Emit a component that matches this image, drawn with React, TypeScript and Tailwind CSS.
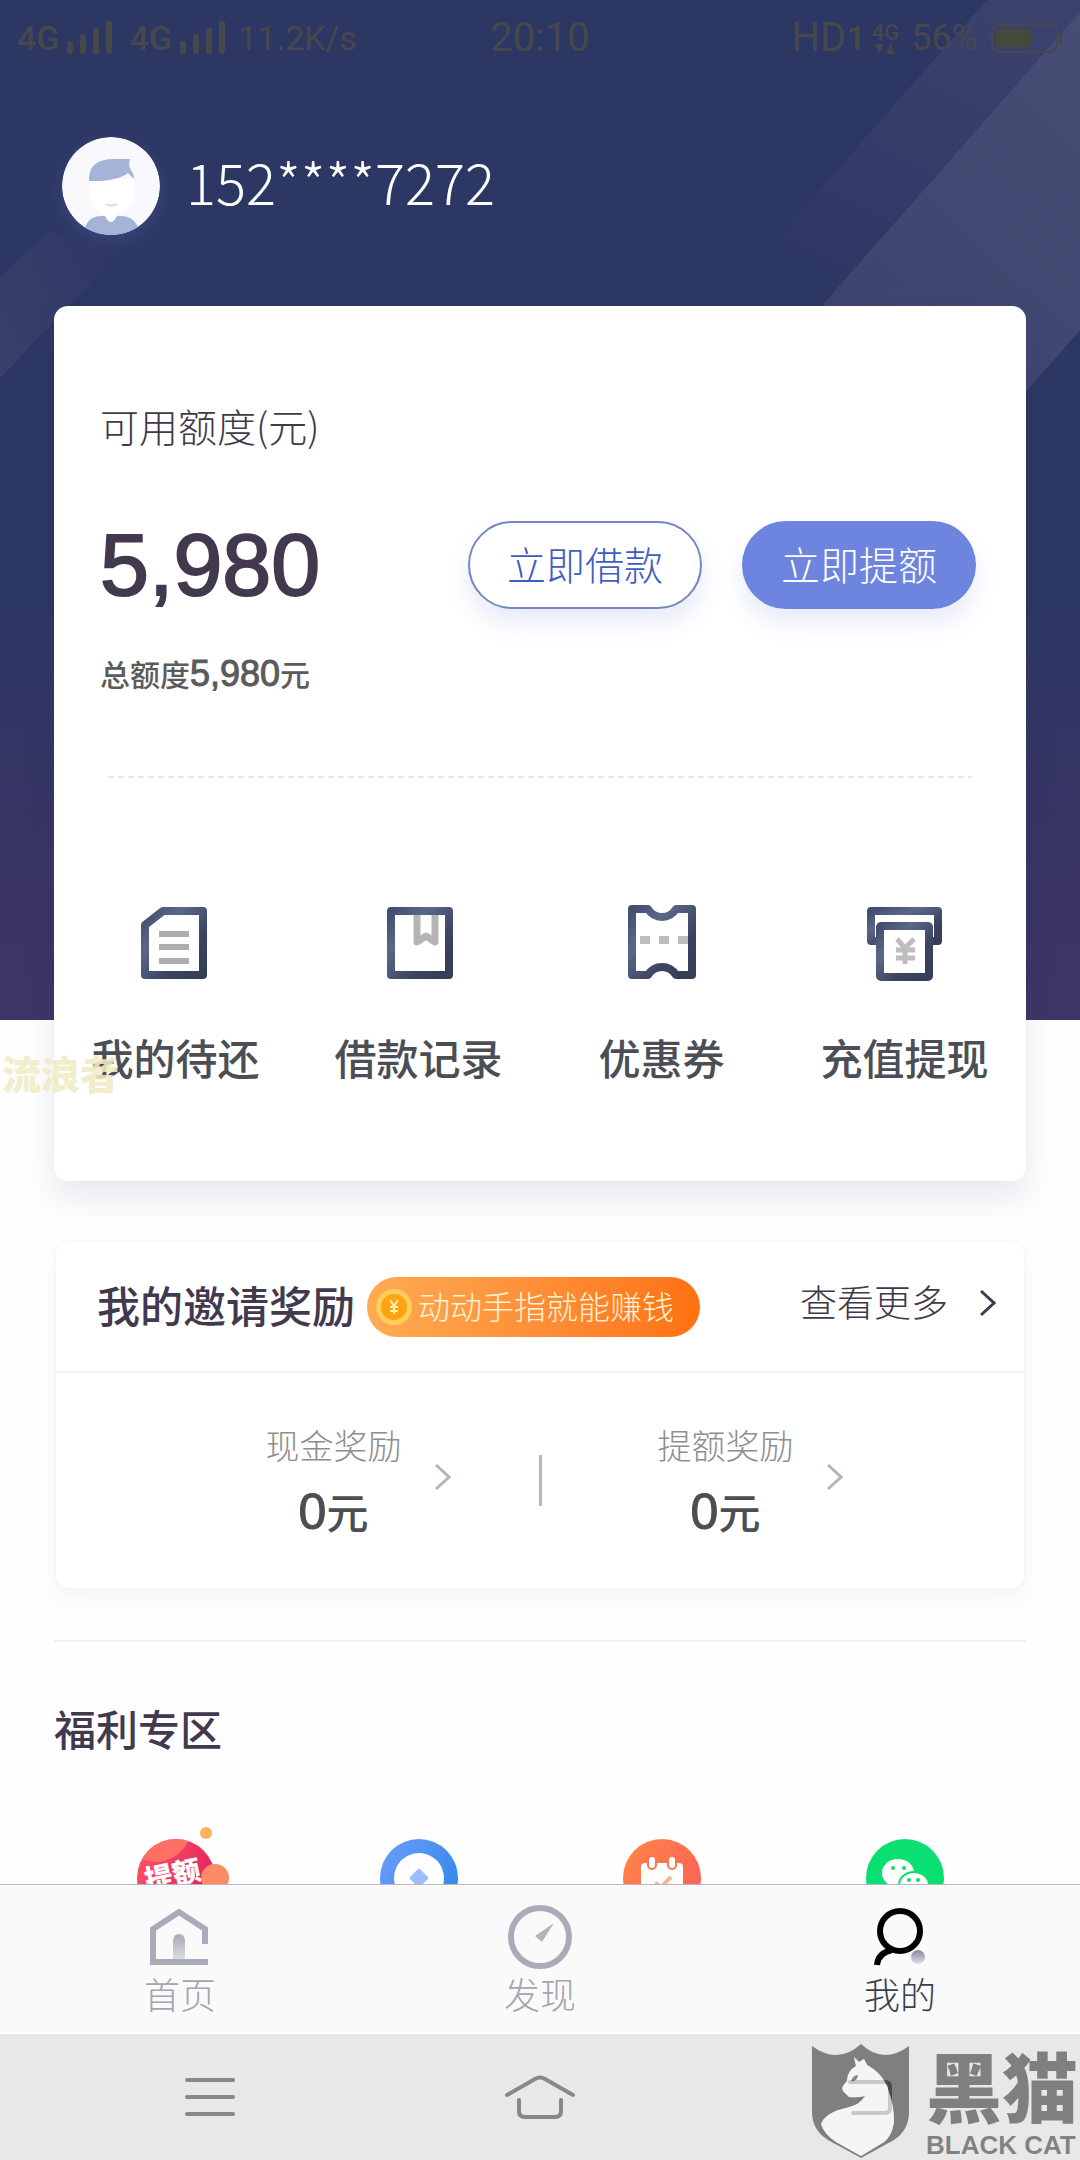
import type { ReactNode } from "react";

function SignalBars() {
  return (
    <svg width="46" height="34" viewBox="0 0 46 34" className="fill-current">
      <rect x="0" y="20" width="6" height="13" rx="2" />
      <rect x="13" y="13" width="6" height="20" rx="2" />
      <rect x="26" y="7" width="6" height="26" rx="2" />
      <rect x="39" y="0" width="6" height="33" rx="2" />
    </svg>
  );
}

function StatusBar() {
  return (
    <div className="grid h-[76px] grid-cols-[1fr_auto_1fr] items-center px-[17px] font-['Roboto',sans-serif] text-[34px] leading-none text-[#47484c]">
      <div className="flex items-center gap-2">
        <span className="font-medium">4G</span>
        <SignalBars />
        <span className="ml-2 font-medium">4G</span>
        <SignalBars />
        <span className="ml-1">11.2K/s</span>
      </div>
      <div className="text-[40px]">20:10</div>
      <div className="flex items-center justify-end gap-3">
        <div className="flex items-center">
          <span className="text-[40px]">HD</span>
          <span className="font-medium">1</span>
          <div className="ml-1.5 flex flex-col items-center">
            <span className="text-[22px] font-medium">4G</span>
            <svg width="22" height="11" viewBox="0 0 22 11" className="fill-current">
              <path d="M1 0h9L5.500 10zM12 10h9L16.500 0z" />
            </svg>
          </div>
        </div>
        <span className="text-[36px]">56%</span>
        <svg width="73" height="31" viewBox="0 0 73 31">
          <rect x="2" y="2" width="65" height="27" rx="7" fill="none" stroke="currentColor" strokeWidth="2" />
          <rect x="6" y="6" width="35" height="18" rx="4" fill="#44493a" />
          <rect x="69" y="10" width="3" height="11" fill="currentColor" />
        </svg>
      </div>
    </div>
  );
}

function HeaderBackdrop() {
  return (
    <svg
      className="absolute inset-x-0 top-0 h-[1020px] w-full"
      viewBox="0 0 1080 1020"
      preserveAspectRatio="none"
    >
      <defs>
        <linearGradient id="sky" x1="0" y1="0" x2="0" y2="1">
          <stop offset="0" stopColor="#2d3764" />
          <stop offset="0.6" stopColor="#2d3764" />
          <stop offset="0.8" stopColor="#383565" />
          <stop offset="1" stopColor="#3d3566" />
        </linearGradient>
        <linearGradient id="beam" x1="1" y1="0" x2="0.2" y2="1">
          <stop offset="0" stopColor="#474e76" />
          <stop offset="1" stopColor="#384069" />
        </linearGradient>
        <linearGradient id="beamSoft" x1="0.9" y1="0" x2="0.3" y2="1">
          <stop offset="0" stopColor="#3c426e" />
          <stop offset="1" stopColor="#2d3764" />
        </linearGradient>
        <linearGradient id="beamLeft" x1="0" y1="1" x2="1" y2="0.3">
          <stop offset="0" stopColor="#3a406c" />
          <stop offset="1" stopColor="#2f3865" />
        </linearGradient>
      </defs>
      <rect width="1080" height="1020" fill="url(#sky)" />
      <path d="M987 0H1080V12L820 306H717Z" fill="url(#beamSoft)" />
      <path d="M1080 12V330L940 490H660Z" fill="url(#beam)" />
      <path d="M0 277L50 231L118 255L0 378Z" fill="url(#beamLeft)" />
    </svg>
  );
}

function Avatar() {
  return (
    <svg width="98" height="98" viewBox="0 0 98 98" className="rounded-full shadow-[0_6px_20px_rgba(110,133,224,0.2)]">
      <circle cx="49" cy="49" r="49" fill="#f9f8fc" />
      <path d="M20 98L24 88Q28 79 40 79H58Q70 79 75 88L78 98Z" fill="#a6b3d8" />
      <path d="M43 70H55V79Q49 91 43 79Z" fill="#fff" />
      <path d="M27 42H72V58Q70 76 49 78Q28 76 27 58Z" fill="#fff" />
      <path d="M27 44Q26 22 52 22H68Q66 30 69 33Q72 37 72 42L66 36Q54 45 27 44Z" fill="#a6b3d8" />
      <path d="M44 67Q49 70 55 67" fill="none" stroke="#dcdce2" strokeWidth="2" />
    </svg>
  );
}

function IconGradient({ id }: { id: string }) {
  return (
    <defs>
      <linearGradient id={id} x1="0" y1="0" x2="1" y2="1">
        <stop offset="0" stopColor="#434d70" />
        <stop offset="0.3" stopColor="#5b6789" />
        <stop offset="0.7" stopColor="#3a4360" />
        <stop offset="1" stopColor="#363e57" />
      </linearGradient>
    </defs>
  );
}

const shortcuts: { label: string; icon: ReactNode }[] = [
  {
    label: "我的待还",
    icon: (
      <svg width="78" height="78" viewBox="0 0 78 78">
        <IconGradient id="g1" />
        <path d="M8 21L26 7H66V71H8Z" fill="none" stroke="url(#g1)" strokeWidth="8" strokeLinejoin="round" />
        <path d="M22 30H52M22 43H52M22 57H52" stroke="#adadad" strokeWidth="6" />
      </svg>
    ),
  },
  {
    label: "借款记录",
    icon: (
      <svg width="78" height="78" viewBox="0 0 78 78">
        <IconGradient id="g2" />
        <path d="M37 10V38L46 32L55 38V10" fill="none" stroke="#b5b5b5" strokeWidth="7" strokeLinejoin="round" />
        <path d="M11 7H69V71H11Z" fill="none" stroke="url(#g2)" strokeWidth="8" strokeLinejoin="round" />
      </svg>
    ),
  },
  {
    label: "优惠券",
    icon: (
      <svg width="78" height="78" viewBox="0 0 78 78">
        <IconGradient id="g3" />
        <path d="M17 32h10v8H17zM36 32h10v8H36zM55 32h10v8H55z" fill="#bdbdbd" />
        <path
          d="M9 5H25Q30 13 39 13Q48 13 53 5H69V71H53Q48 63 39 63Q30 63 25 71H9Z"
          fill="none"
          stroke="url(#g3)"
          strokeWidth="8"
          strokeLinejoin="round"
        />
      </svg>
    ),
  },
  {
    label: "充值提现",
    icon: (
      <svg width="78" height="78" viewBox="0 0 78 78">
        <IconGradient id="g4" />
        <path d="M12 37H5V7H72V37H65" fill="none" stroke="url(#g4)" strokeWidth="8" strokeLinejoin="round" />
        <rect x="14" y="22" width="49" height="51" rx="1" fill="#fff" stroke="url(#g4)" strokeWidth="8" />
        <path d="M31 35L39 44L48 35M39 44V60M30 46H49M30 54H49" fill="none" stroke="#bdbdbd" strokeWidth="5" />
      </svg>
    ),
  },
];

const welfare: ReactNode[] = [
  <svg key="raise" width="96" height="96" viewBox="0 0 96 96" className="overflow-visible">
    <defs>
      <linearGradient id="w1" x1="0" y1="0" x2="1" y2="0.6">
        <stop offset="0" stopColor="#ff5a68" />
        <stop offset="1" stopColor="#e01f5c" />
      </linearGradient>
      <clipPath id="w1c">
        <circle cx="48" cy="53" r="39" />
      </clipPath>
    </defs>
    <circle cx="48" cy="53" r="39" fill="url(#w1)" />
    <circle cx="28" cy="2" r="35" fill="#ff6f63" clipPath="url(#w1c)" />
    <circle cx="78" cy="8" r="6" fill="#fbb45c" />
    <text
      x="45"
      y="60"
      textAnchor="middle"
      transform="rotate(-12 45 52)"
      className="fill-white font-['Noto_Sans_CJK_SC',sans-serif] text-[28px] font-black"
    >
      提额
    </text>
    <circle cx="87" cy="53" r="14" fill="#ff8a66" />
  </svg>,
  <svg key="gem" width="96" height="96" viewBox="0 0 96 96">
    <defs>
      <linearGradient id="w2" x1="0" y1="0" x2="1" y2="0.6">
        <stop offset="0" stopColor="#6f9dfb" />
        <stop offset="1" stopColor="#3389ea" />
      </linearGradient>
    </defs>
    <circle cx="48" cy="53" r="39" fill="url(#w2)" />
    <circle cx="48" cy="53" r="25" fill="#fff" />
    <rect x="41" y="46" width="14" height="14" rx="2" transform="rotate(45 48 53)" fill="#9dbdfb" />
  </svg>,
  <svg key="calendar" width="96" height="96" viewBox="0 0 96 96">
    <defs>
      <linearGradient id="w3" x1="0" y1="0" x2="1" y2="0.6">
        <stop offset="0" stopColor="#ff8548" />
        <stop offset="1" stopColor="#fd6455" />
      </linearGradient>
    </defs>
    <circle cx="48" cy="53" r="39" fill="url(#w3)" />
    <rect x="27" y="38" width="42" height="36" rx="4" fill="#fff" />
    <rect x="34" y="31" width="8" height="13" rx="4" fill="#fff" stroke="#fd7550" strokeWidth="2" />
    <rect x="54" y="31" width="8" height="13" rx="4" fill="#fff" stroke="#fd7550" strokeWidth="2" />
    <path d="M41 58L47 62L57 52" fill="none" stroke="#fdb19c" strokeWidth="4" />
  </svg>,
  <svg key="wechat" width="96" height="96" viewBox="0 0 96 96">
    <circle cx="48" cy="53" r="39" fill="#0adf71" />
    <ellipse cx="41" cy="48" rx="16" ry="14" fill="#fff" />
    <circle cx="36" cy="43" r="2" fill="#0adf71" />
    <circle cx="47" cy="43" r="2" fill="#0adf71" />
    <ellipse cx="57" cy="60" rx="15" ry="13" fill="#fff" stroke="#0adf71" strokeWidth="2" />
    <circle cx="52" cy="55" r="2" fill="#0adf71" />
    <circle cx="61" cy="55" r="2" fill="#0adf71" />
  </svg>,
];

function Chevron({ className }: { className: string }) {
  return (
    <svg width="16" height="28" viewBox="0 0 16 28" className={className}>
      <path d="M1 2L14 14L1 26" fill="none" stroke="currentColor" strokeWidth="3" />
    </svg>
  );
}

function QuotaCard() {
  return (
    <section className="relative mx-[54px] mt-[71px] rounded-[14px] bg-white pb-[100px] pt-[99px] shadow-[0_16px_32px_rgba(45,55,100,0.11)]">
      <div className="pl-[46px] pr-[50px]">
        <h2 className="text-[39px] font-light leading-[40px] text-[#40394a]">可用额度(元)</h2>
        <div className="mt-[76px] flex items-center justify-between">
          <div className="font-['Liberation_Sans',sans-serif] text-[88px] leading-[88px] text-[#43394f] [-webkit-text-stroke:2px_currentColor]">
            5,980
          </div>
          <div className="flex gap-10">
            <button className="h-[88px] w-[234px] rounded-full border-2 border-[#7488c0] bg-white pb-1 text-[39px] font-light leading-none text-[#3f5bc4] shadow-[0_14px_22px_rgba(110,133,224,0.16)]">
              立即借款
            </button>
            <button className="h-[88px] w-[234px] rounded-full bg-[#6e85e0] pb-1 text-[39px] font-light leading-none text-white shadow-[0_14px_22px_rgba(110,133,224,0.16)]">
              立即提额
            </button>
          </div>
        </div>
        <p className="mt-12 text-[30px] font-medium leading-[32px] text-[#5b5b5b]">
          总额度
          <span className="font-['Liberation_Sans',sans-serif] text-[36px] font-normal [-webkit-text-stroke:1px_currentColor]">
            5,980
          </span>
          元
        </p>
        <div className="ml-2 mr-1 mt-[86px] h-0.5 bg-[repeating-linear-gradient(90deg,#e6e6ea_0_6px,transparent_6px_10px)]" />
      </div>
      <nav className="mt-[126px] grid grid-cols-4">
        {shortcuts.map((item) => (
          <a key={item.label} href="#" className="flex flex-col items-center gap-[51px]">
            {item.icon}
            <span className="text-[42px] font-medium leading-[48px] text-[#4b4e55]">{item.label}</span>
          </a>
        ))}
      </nav>
    </section>
  );
}

function Reward({ label }: { label: string }) {
  return (
    <a href="#" className="flex items-center gap-[33px]">
      <div className="text-center">
        <div className="text-[34px] font-light leading-[40px] text-[#8e8e8e]">{label}</div>
        <div className="mt-[22px] text-[42px] font-medium leading-[48px] text-[#4b4e52]">
          <span className="font-['Liberation_Sans',sans-serif] text-[50px] font-normal [-webkit-text-stroke:1px_currentColor]">
            0
          </span>
          元
        </div>
      </div>
      <Chevron className="mb-2 text-[#b0b5c0]" />
    </a>
  );
}

function InviteCard() {
  return (
    <section className="relative mx-[56px] mt-[61px] rounded-xl bg-white shadow-[0_10px_24px_rgba(45,55,100,0.05),0_0_3px_rgba(45,55,100,0.05)]">
      <div className="flex h-[131px] items-center border-b-2 border-[#efeff1] pl-[41px] pr-7">
        <h2 className="pb-1.5 text-[43px] font-medium leading-[48px] text-[#43394f]">我的邀请奖励</h2>
        <div className="ml-3 flex h-[60px] w-[333px] items-center rounded-full bg-linear-to-r from-[#ffab52] to-[#ff7110] pl-[9px]">
          <svg width="36" height="36" viewBox="0 0 36 36">
            <circle cx="18" cy="18" r="18" fill="#ffce5c" />
            <circle cx="18" cy="18" r="13" fill="#ffa410" />
            <path d="M14 11L18 17L22 11M18 17V25M14 18H22M14 22H22" fill="none" stroke="#fff0b0" strokeWidth="2" />
          </svg>
          <span className="ml-1.5 pb-1 text-[32px] font-light leading-[40px] text-[#fff3d6]">动动手指就能赚钱</span>
        </div>
        <a href="#" className="ml-auto flex items-center gap-8 pb-2 text-[#40394a]">
          <span className="pb-1 text-[37px] font-light leading-[48px]">查看更多</span>
          <Chevron className="text-[#40394a]" />
        </a>
      </div>
      <div className="grid h-[215px] grid-cols-[1fr_auto_1fr] items-center">
        <div className="flex justify-end pr-[88px]">
          <Reward label="现金奖励" />
        </div>
        <div className="h-[51px] w-[3px] bg-[#b4b8c4]" />
        <div className="flex pl-[116px]">
          <Reward label="提额奖励" />
        </div>
      </div>
    </section>
  );
}

const tabs: { label: string; active?: boolean; icon: ReactNode }[] = [
  {
    label: "首页",
    icon: (
      <svg width="64" height="64" viewBox="0 0 64 64">
        <defs>
          <linearGradient id="t1" x1="0" y1="0" x2="0" y2="1">
            <stop offset="0" stopColor="#a9abb5" />
            <stop offset="1" stopColor="#dcdce0" />
          </linearGradient>
        </defs>
        <path d="M57 39V24L31 7L5 24V57H60" fill="none" stroke="#a9abb8" strokeWidth="6" />
        <path d="M25 54V35Q26 29 31 29Q36 29 37 35V54Z" fill="url(#t1)" />
      </svg>
    ),
  },
  {
    label: "发现",
    icon: (
      <svg width="64" height="64" viewBox="0 0 64 64">
        <circle cx="32" cy="32" r="29" fill="none" stroke="#a9abb8" strokeWidth="6" />
        <path d="M46 18L27 31L34 37Z" fill="#b4b5bc" />
      </svg>
    ),
  },
  {
    label: "我的",
    active: true,
    icon: (
      <svg width="64" height="64" viewBox="0 0 64 64">
        <defs>
          <linearGradient id="t3" x1="0" y1="0" x2="0" y2="1">
            <stop offset="0" stopColor="#85879f" />
            <stop offset="1" stopColor="#dfe0e8" />
          </linearGradient>
        </defs>
        <circle cx="32" cy="26" r="20" fill="none" stroke="#000" strokeWidth="6" />
        <path d="M9 60Q10 48 24 45" fill="none" stroke="#000" strokeWidth="6" />
        <circle cx="50" cy="52" r="7" fill="url(#t3)" />
      </svg>
    ),
  },
];

function TabBar() {
  return (
    <nav className="grid h-[150px] shrink-0 grid-cols-3 border-b-2 border-t border-b-white border-t-[#b9b9bd] bg-[#fafafa]">
      {tabs.map((tab) => (
        <a
          key={tab.label}
          href="#"
          className={`flex flex-col items-center pt-5 ${tab.active ? "text-[#384052]" : "text-[#a3a5b0]"}`}
        >
          {tab.icon}
          <span className="text-[36px] font-light leading-[48px]">{tab.label}</span>
        </a>
      ))}
    </nav>
  );
}

function SystemBar() {
  return (
    <div className="relative grid h-[126px] shrink-0 grid-cols-3 bg-[#e8e8e8] px-[45px] text-[#888]">
      <button aria-label="菜单" className="flex items-center justify-center">
        <svg width="50" height="44" viewBox="0 0 50 44">
          <path d="M2 5H48M2 22H48M2 39H48" stroke="currentColor" strokeWidth="4" strokeLinecap="round" />
        </svg>
      </button>
      <button aria-label="主屏幕" className="flex items-center justify-center">
        <svg width="72" height="46" viewBox="0 0 72 46">
          <g fill="none" stroke="currentColor" strokeWidth="4" strokeLinecap="round">
            <path d="M3 21L31 5Q36 2 41 5L69 21" />
            <path d="M15 26V37Q15 43 21 43H51Q57 43 57 37V26" />
          </g>
        </svg>
      </button>
      <button aria-label="返回" className="flex items-center justify-center">
        <svg width="46" height="40" viewBox="0 0 46 40">
          <path d="M3 5H38Q43 5 43 10V31Q43 36 38 36H6" fill="none" stroke="currentColor" strokeWidth="4" strokeLinecap="round" />
        </svg>
      </button>
      <BlackCatMark />
    </div>
  );
}

const shield =
  "M0 2Q12 11 24 11Q37 11 49 0Q61 11 73 11Q85 11 97 2V68Q97 86 82 96L49 114L16 96Q0 86 0 68Z";
const cat =
  "M42 13L47 18L52 15L55 21Q72 30 77 48Q82 62 82 78Q80 92 72 98L49 112L24 98Q12 90 9 80Q14 68 34 64Q48 61 53 52Q45 54 37 53L33 49Q29 46 31 42L35 37Q35 27 44 22Z";

function BlackCatMark() {
  return (
    <div className="pointer-events-none absolute bottom-0 right-0 flex items-end gap-4 text-black/45">
      <svg width="98" height="116" viewBox="0 0 98 116">
        <path d={`${shield}${cat}`} fill="currentColor" fillRule="evenodd" />
        <path d={cat} fill="#fff" fillOpacity="0.55" />
        <path d="M39 37Q41 31 46 31Q45 38 39 37Z" fill="currentColor" />
      </svg>
      <div className="mr-0.5 flex flex-col gap-2.5">
        <span className="text-[76px] font-black leading-[72px]">黑猫</span>
        <span className="font-['Liberation_Sans',sans-serif] text-[26px] font-bold leading-[30px]">BLACK CAT</span>
      </div>
    </div>
  );
}

export default function App() {
  return (
    <div className="flex h-screen flex-col bg-[#fefefe] font-['Noto_Sans_CJK_SC',sans-serif]">
      <main className="relative min-h-0 flex-1 overflow-hidden">
        <HeaderBackdrop />
        <header className="relative">
          <StatusBar />
          <div className="mt-[61px] flex items-center gap-[26px] pl-[62px]">
            <Avatar />
            <span className="pb-2.5 text-[56px] font-light leading-[64px] text-white">152****7272</span>
          </div>
        </header>
        <QuotaCard />
        <InviteCard />
        <section className="mx-[54px] mt-[52px] border-t-2 border-[#f0f0f2] pt-[62px]">
          <h2 className="text-[42px] font-medium leading-[48px] text-[#43394f]">福利专区</h2>
          <div className="mt-[73px] grid grid-cols-4 justify-items-center">{welfare}</div>
        </section>
        {/* user name stamp */}
        <span className="absolute left-0.5 top-[1048px] text-[39px] font-black leading-[48px] text-[#f1ebc4]/90">
          流浪者
        </span>
      </main>
      <TabBar />
      <SystemBar />
    </div>
  );
}
